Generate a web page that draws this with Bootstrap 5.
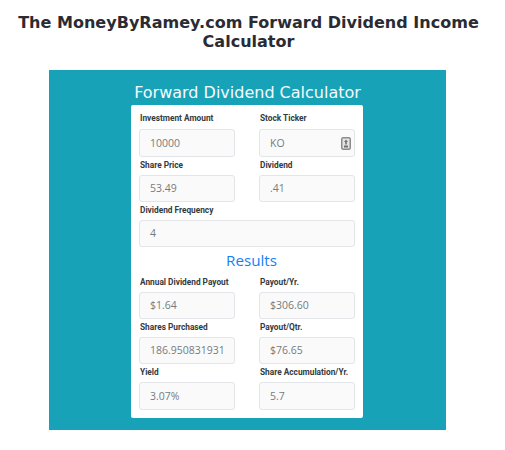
<!DOCTYPE html>
<html lang="en">
<head>
<meta charset="utf-8">
<title>Forward Dividend Income Calculator</title>
<link rel="stylesheet" href="https://cdn.jsdelivr.net/npm/bootstrap@5.3.0/dist/css/bootstrap.min.css">
<style>
body { background:#fff; font-family:"Open Sans","Noto Sans",sans-serif; overflow:hidden; }
.page-title { font-family:"DejaVu Sans",sans-serif; font-weight:700; font-size:16.05px; line-height:19px; color:#2b2b33; text-align:center; margin:0; padding:13px 12px 0 4px; }
.calc-panel { background:#17a2b8; width:397px; height:360px; margin:19px 0 0 49px; padding-top:10px; }
.calc-title { font-family:"DejaVu Sans",sans-serif; font-weight:400; font-size:16px; line-height:25px; color:#f4fbfc; text-align:center; margin:0; }
.calc-body { background:#fff; width:232px; height:313px; margin-left:82px; border-radius:2px; padding:8px 8px 0; }
.field-grid { display:grid; grid-template-columns:96px 96px; column-gap:24px; }
.field-wide { grid-column:1 / 3; }
.field-label { display:block; font-family:Roboto,sans-serif; font-size:8.3px; font-weight:700; line-height:11px; height:15px; color:#333a40; margin:0; padding-left:1px; white-space:nowrap; }
.field-label.first-label { height:16px; }
.field-box { display:flex; align-items:center; justify-content:space-between; width:100%; height:27px; border:1px solid #e3e5e8; border-radius:3px; background:#fafafb; color:#767a7e; font-size:10.5px; padding:1px 2px 0 10px; margin-bottom:3px; }
.field-box.tall { height:28px; }
.results-title { font-size:15.2px; font-weight:500; line-height:20px; color:#147ff5; text-align:center; margin:0 0 7px; padding-left:9px; }
.ticker-icon { width:10px; height:13px; margin-right:1px; margin-top:-1px; }
</style>
</head>
<body>
<h1 class="page-title">The MoneyByRamey.com Forward Dividend Income Calculator</h1>
<div class="calc-panel">
  <h2 class="calc-title">Forward Dividend Calculator</h2>
  <div class="calc-body">
    <div class="field-grid">
      <div><label class="field-label first-label">Investment Amount</label><div class="field-box tall">10000</div></div>
      <div><label class="field-label first-label">Stock Ticker</label><div class="field-box tall">KO
        <svg class="ticker-icon" viewBox="0 0 10 13" aria-hidden="true"><rect x="0.75" y="0.75" width="8.5" height="11.5" rx="1.5" fill="#e4e4e4" stroke="#8a8b8b" stroke-width="1.5"/><path d="M5 2.5 7 5H3z" fill="#6f7070"/><rect x="4.2" y="5" width="1.6" height="2.5" fill="#6f7070"/><rect x="3" y="8.5" width="4" height="2" fill="#6f7070"/></svg></div></div>
      <div><label class="field-label">Share Price</label><div class="field-box">53.49</div></div>
      <div><label class="field-label">Dividend</label><div class="field-box">.41</div></div>
      <div class="field-wide"><label class="field-label">Dividend Frequency</label><div class="field-box">4</div></div>
    </div>
    <h3 class="results-title">Results</h3>
    <div class="field-grid">
      <div><label class="field-label">Annual Dividend Payout</label><div class="field-box">$1.64</div></div>
      <div><label class="field-label">Payout/Yr.</label><div class="field-box">$306.60</div></div>
      <div><label class="field-label">Shares Purchased</label><div class="field-box">186.950831931</div></div>
      <div><label class="field-label">Payout/Qtr.</label><div class="field-box">$76.65</div></div>
      <div><label class="field-label">Yield</label><div class="field-box tall">3.07%</div></div>
      <div><label class="field-label">Share Accumulation/Yr.</label><div class="field-box tall">5.7</div></div>
    </div>
  </div>
</div>
</body>
</html>
